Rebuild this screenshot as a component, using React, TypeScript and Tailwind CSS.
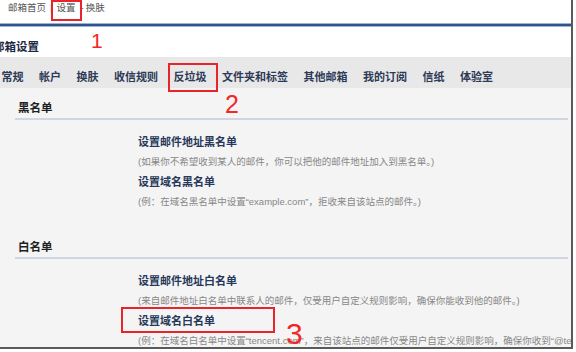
import React from "react";

/* ------------------------------------------------------------
   DATA
------------------------------------------------------------ */

const TABS = [
  "常规",
  "帐户",
  "换肤",
  "收信规则",
  "反垃圾",
  "文件夹和标签",
  "其他邮箱",
  "我的订阅",
  "信纸",
  "体验室",
];

type Item = { title: string; desc: string };

const BLACK: Item[] = [
  {
    title: "设置邮件地址黑名单",
    desc: "(如果你不希望收到某人的邮件，你可以把他的邮件地址加入到黑名单。)",
  },
  {
    title: "设置域名黑名单",
    desc: "(例：在域名黑名单中设置“example.com”，拒收来自该站点的邮件。)",
  },
];

const WHITE: Item[] = [
  {
    title: "设置邮件地址白名单",
    desc: "(来自邮件地址白名单中联系人的邮件，仅受用户自定义规则影响，确保你能收到他的邮件。)",
  },
  {
    title: "设置域名白名单",
    desc: "(例：在域名白名单中设置“tencent.com”，来自该站点的邮件仅受用户自定义规则影响，确保你收到“@tencent.com”的邮件。)",
  },
];

const FONT = {
  fontFamily: '"Liberation Sans", "Noto Sans CJK SC", sans-serif',
};

/* ------------------------------------------------------------
   PIECES
------------------------------------------------------------ */

const Section: React.FC<{ title: string; items: Item[]; className?: string }> = ({
  title,
  items,
  className,
}) => (
  <div className={`ml-[15px] mr-[3px] pt-[13px] ${className ?? ""}`}>
    <div className="h-[14px] pl-[3px] text-[11.5px] leading-[14px] font-bold text-[#1f1f1f]">
      {title}
    </div>
    <div className="mt-[3px] h-[2px] bg-[#cfd6e1]" />
    <div className="pt-[11.5px] pl-[123px]">
      {items.map((it) => (
        <div key={it.title}>
          <div className="h-[20px] text-[11px] leading-[20px] font-bold text-[#27385a] whitespace-nowrap">
            {it.title}
          </div>
          <div className="h-[20px] text-[9.5px] leading-[20px] text-[#878787] whitespace-nowrap">
            {it.desc}
          </div>
        </div>
      ))}
    </div>
  </div>
);

/* ------------------------------------------------------------
   APP
------------------------------------------------------------ */

export default function App() {
  return (
    <div className="w-[576px] h-[352px] bg-white overflow-hidden" style={FONT}>
      <div className="relative w-[573px] h-[349px] overflow-hidden border-r-2 border-b-2 border-[#5a5a5a] bg-white">
        {/* top nav */}
        <div className="h-[23px] pl-[8px] pt-[1px] flex items-start text-[9.5px] leading-[13px] text-[#555]">
          <span>邮箱首页</span>
          <span className="ml-[4px] text-[#999]">|</span>
          <span className="ml-[4px]">设置</span>
          <span className="ml-[5px]">-</span>
          <span className="ml-[2px]">换肤</span>
        </div>

        {/* blue rule */}
        <div className="h-[4px] border-y border-[#9db3cf] bg-[#2c5689]" />

        {/* title */}
        <div className="h-[30px] flex items-end pb-[4px]">
          <span className="-ml-[7px] text-[11.5px] leading-[12px] font-bold text-[#1d2a44]">
            邮箱设置
          </span>
        </div>

        {/* tabs */}
        <div className="h-[31px] bg-[#e8e8e8] pt-[14px] pl-[1.5px] flex gap-[15.5px] text-[11px] leading-[13px] font-bold text-[#2c3a57] whitespace-nowrap">
          {TABS.map((t) => (
            <span key={t}>{t}</span>
          ))}
        </div>

        {/* content */}
        <div className="h-[280px] bg-[#f4f4f4]">
          <Section title="黑名单" items={BLACK} className="pb-[15.5px]" />
          <Section title="白名单" items={WHITE} />
        </div>

        {/* annotations */}
        <div className="absolute left-[51px] top-0 w-[31px] h-[21px] border-2 border-[#e8242a]" />
        <div className="absolute left-[91px] top-[29px] text-[21px] leading-[24px] text-[#f22727]">1</div>

        <div className="absolute left-[168px] top-[63px] w-[50px] h-[29px] border-2 border-[#e8242a]" />
        <div className="absolute left-[225px] top-[90px] text-[25px] leading-[28px] text-[#f22727]">2</div>

        <div className="absolute left-[121px] top-[307px] w-[154px] h-[26px] border-2 border-[#e8242a]" />
        <div className="absolute left-[286px] top-[318px] text-[30px] leading-[32px] text-[#f22727]">3</div>
      </div>
    </div>
  );
}
